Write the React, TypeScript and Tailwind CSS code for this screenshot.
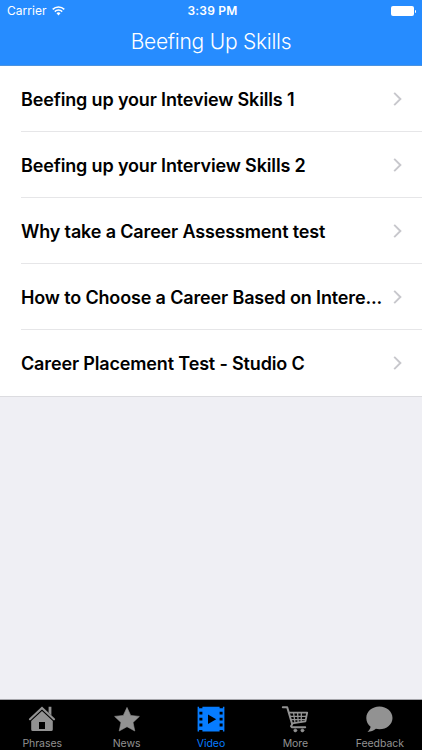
import React from 'react';

const videos = [
  { id: 1, title: 'Beefing up your Inteview Skills 1' },
  { id: 2, title: 'Beefing up your Interview Skills 2' },
  { id: 3, title: 'Why take a Career Assessment test' },
  { id: 4, title: 'How to Choose a Career Based on Intere...' },
  { id: 5, title: 'Career Placement Test - Studio C' },
];

const HomeIcon = () => (
  <svg width="28" height="28" viewBox="0 0 28 28" fill="currentColor">
    <path d="M20.6 1.8h2.8v8.6l-2.8-2.6z" />
    <path d="M2 14.2 14 3l12 11.2" fill="none" stroke="currentColor" strokeWidth="2.2" strokeLinecap="round" />
    <path
      fillRule="evenodd"
      d="M14 6 24.8 16.1v8.4a1.6 1.6 0 0 1-1.6 1.6H4.8a1.6 1.6 0 0 1-1.6-1.6v-8.4zM11 17v7h6v-7z"
    />
  </svg>
);

const StarIcon = () => (
  <svg width="28" height="28" viewBox="0 0 28 28" fill="currentColor" stroke="currentColor" strokeWidth=".6" strokeLinejoin="round">
    <path d="M14 2.4l3.7 8 8.7 1-6.4 6 1.8 8.6-7.8-4.3L6.2 26 8 17.4l-6.4-6 8.7-1z" />
  </svg>
);

const FilmIcon = () => (
  <svg width="28" height="28" viewBox="0 0 28 28" fill="currentColor">
    <path
      fillRule="evenodd"
      d="M.6 1.8h1.5v1.5h3.3V1.8h17.2v1.5h3.3V1.8h1.5v24.6h-1.5v-1.5h-3.3v1.5H5.4v-1.5H2.1v1.5H.6zM2.4 6.8v2.8h3V6.8zM2.4 12.7v2.8h3v-2.8zM2.4 18.6v2.8h3v-2.8zM22.6 6.8v2.8h3V6.8zM22.6 12.7v2.8h3v-2.8zM22.6 18.6v2.8h3v-2.8zM11 9.4v9.6l8.2-4.8z"
    />
  </svg>
);

const CartIcon = () => (
  <svg width="28" height="28" viewBox="0 0 28 28" fill="none" stroke="currentColor" strokeLinecap="round" strokeLinejoin="round">
    <path d="M1.8 2.2h4.4l5 17-1.2 2 .8 1h13.4" strokeWidth="2" />
    <path d="M7.8 7.6h18.4l-1.8 8.8-13.2 2" strokeWidth="1.8" />
    <path d="M9 11.3h16M10 14.6h14.4M12.6 8l1.4 9.6M16.6 8l.6 9.2M20.4 8l-.2 8.8" strokeWidth="1.3" />
    <circle cx="14.3" cy="25.4" r="1.5" fill="currentColor" strokeWidth=".7" />
    <circle cx="21.4" cy="25.4" r="1.5" fill="currentColor" strokeWidth=".7" />
  </svg>
);

const BubbleIcon = () => (
  <svg width="28" height="28" viewBox="0 0 28 28" fill="currentColor">
    <path d="M13.4 1.6c7.3 0 13.1 5 13.1 11.3s-5.8 11.3-13.1 11.3c-1.2 0-2.4-.1-3.5-.4-2.2 1.9-5 3-8.4 3.1 1.7-1.5 2.7-3.1 3.1-5.2C1.9 19.6.3 16.4.3 12.9.3 6.6 6.1 1.6 13.4 1.6z" />
  </svg>
);

const tabs = [
  { name: 'Phrases', icon: HomeIcon },
  { name: 'News', icon: StarIcon },
  { name: 'Video', icon: FilmIcon, active: true },
  { name: 'More', icon: CartIcon },
  { name: 'Feedback', icon: BubbleIcon },
];

const StatusBar = () => (
  <div className="grid h-[22px] grid-cols-3 items-center pr-1.5 pl-[7px] text-[12px] leading-none">
    <div className="flex items-center gap-[5px]">
      <span className="tracking-[0.05px]">Carrier</span>
      <svg width="13" height="10" viewBox="0 0 13 10" fill="none" stroke="currentColor" strokeWidth="1.5">
        <path d="M.7 3.4a8.3 8.3 0 0 1 11.6 0M2.8 5.6a5.3 5.3 0 0 1 7.4 0" />
        <path d="M6.5 9.4 4.5 7.3a2.9 2.9 0 0 1 4 0z" fill="currentColor" stroke="none" />
      </svg>
    </div>
    <span className="pl-0.5 text-center font-semibold tracking-[0.2px]">3:39 PM</span>
    <div className="flex items-center justify-end">
      <div className="h-2.5 w-[23px] rounded-[2px] bg-white" />
      <div className="ml-px h-[3px] w-px rounded-r bg-white" />
    </div>
  </div>
);

const VideoRow = ({ title, last }: { title: string; last: boolean }) => (
  <li className="flex h-[66px] pl-[21px]">
    <div className={`flex min-w-0 flex-1 items-center justify-between border-b pr-5 ${last ? 'border-transparent' : 'border-[#e6e6e8]'}`}>
      <span className="pt-0.5 text-[18px] leading-7 font-semibold tracking-[-0.15px] whitespace-nowrap text-black">{title}</span>
      <svg width="9" height="14" viewBox="0 0 9 14" fill="none" stroke="#c7c7cc" strokeWidth="1.9" className="shrink-0">
        <path d="M1.2 .9 7.4 7l-6.2 6.1" />
      </svg>
    </div>
  </li>
);

const App: React.FC = () => {
  return (
    <div className="flex h-screen flex-col bg-[#efeff4] font-['Inter','Liberation_Sans',sans-serif]">
      <header className="h-[66px] shrink-0 border-b border-[#4b93e0] bg-[#268cff] text-white">
        <StatusBar />
        <h1 className="text-center text-[21px] leading-10 font-[350] tracking-[-0.25px]">Beefing Up Skills</h1>
      </header>

      <main className="flex-1">
        <ul className="border-b border-[#dcdce0] bg-white">
          {videos.map((video, i) => (
            <VideoRow key={video.id} title={video.title} last={i === videos.length - 1} />
          ))}
        </ul>
      </main>

      <nav className="grid h-[51px] shrink-0 grid-cols-5 border-t border-[#a5a5aa] bg-black">
        {tabs.map(({ name, icon: Icon, active }) => (
          <div key={name} className={`flex flex-col items-center pt-[5px] ${active ? 'text-[#067cff]' : 'text-[#929292]'}`}>
            <Icon />
            <span className="mt-[3px] text-[10.5px] leading-[15px] tracking-[-0.05px]">{name}</span>
          </div>
        ))}
      </nav>
    </div>
  );
};

export default App;
